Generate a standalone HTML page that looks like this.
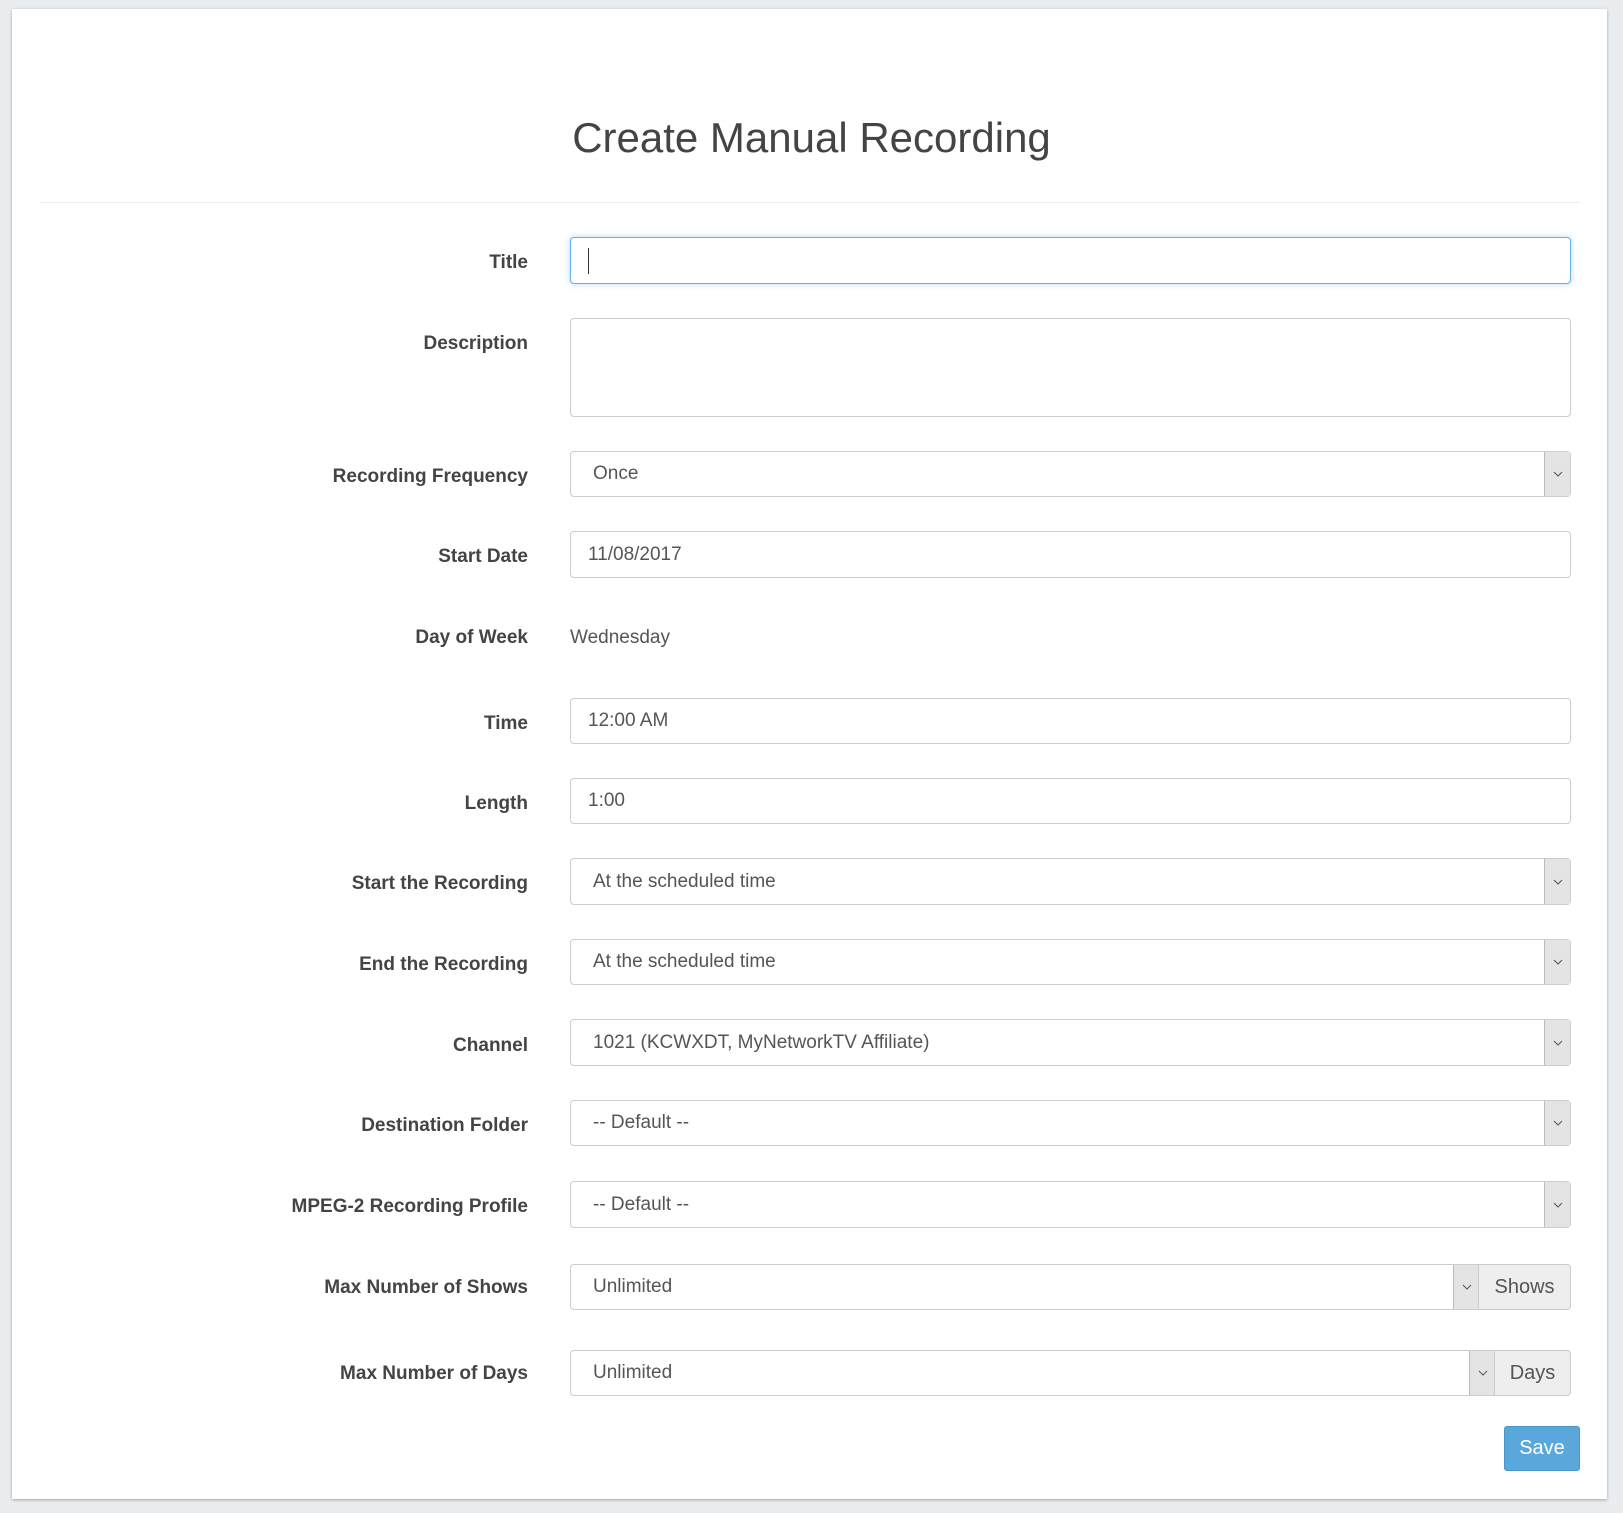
<!DOCTYPE html>
<html><head><meta charset="utf-8"><style>
body{margin:0;width:1623px;height:1513px;background:#e9edf0;font-family:"Liberation Sans",sans-serif;color:#555;position:relative;overflow:hidden}
.panel{position:absolute;left:12px;top:9px;width:1595px;height:1490px;background:#fff;box-shadow:0 1px 3px rgba(0,0,0,.3)}
h1{position:absolute;left:0;width:1623px;top:114px;margin:0;text-align:center;font-weight:normal;font-size:42px;color:#444}
.hr{position:absolute;left:39px;width:1541px;top:202px;height:1px;background:#eee}
.lab{position:absolute;right:1095px;font-weight:bold;font-size:19px;color:#444;text-align:right;white-space:nowrap}
.in{position:absolute;left:570px;width:1001px;border:1px solid #ccc;border-radius:4px;box-sizing:border-box;font-size:19px;color:#555;padding-left:17px;display:flex;align-items:center;background:#fff}
.sel{padding-left:22px}
.arr{position:absolute;top:0;bottom:0;width:25px;background:#e4e4e4;border-left:1px solid #bbb;display:flex;align-items:center;justify-content:center}
.arr svg{width:10px;height:6px}
.add{position:absolute;top:-1px;bottom:-1px;right:-1px;background:#eee;border:1px solid #ccc;border-radius:0 4px 4px 0;display:flex;align-items:center;justify-content:center;font-size:20px;color:#555;box-sizing:border-box}
.btn{position:absolute;left:1504px;top:1426px;width:76px;height:45px;background:#5aa7dc;border:1px solid #4a95c8;border-radius:3px;color:#fff;font-size:20px;display:flex;align-items:center;justify-content:center;box-sizing:border-box}
</style></head><body>
<div class="panel"></div>
<h1>Create Manual Recording</h1>
<div class="hr"></div>

<div class="lab" style="top:252px">Title</div>
<div class="in" style="top:237px;height:47px;border-color:#66afe9;box-shadow:0 0 6px rgba(102,175,233,.5)"><span style="display:inline-block;width:1px;height:26px;background:#333"></span></div>

<div class="lab" style="top:333px">Description</div>
<div class="in" style="top:318px;height:99px"></div>

<div class="lab" style="top:466px">Recording Frequency</div>
<div class="in sel" style="top:451px;height:46px">Once<div class="arr" style="right:0"><svg viewBox="0 0 10 6"><path d="M1 1L5 5L9 1" stroke="#555" fill="none"/></svg></div></div>

<div class="lab" style="top:546px">Start Date</div>
<div class="in" style="top:531px;height:47px">11/08/2017</div>

<div class="lab" style="top:627px">Day of Week</div>
<div style="position:absolute;left:570px;top:627px;font-size:19px;color:#555">Wednesday</div>

<div class="lab" style="top:713px">Time</div>
<div class="in" style="top:698px;height:46px">12:00 AM</div>

<div class="lab" style="top:793px">Length</div>
<div class="in" style="top:778px;height:46px">1:00</div>

<div class="lab" style="top:873px">Start the Recording</div>
<div class="in sel" style="top:858px;height:47px">At the scheduled time<div class="arr" style="right:0"><svg viewBox="0 0 10 6"><path d="M1 1L5 5L9 1" stroke="#555" fill="none"/></svg></div></div>

<div class="lab" style="top:954px">End the Recording</div>
<div class="in sel" style="top:939px;height:46px">At the scheduled time<div class="arr" style="right:0"><svg viewBox="0 0 10 6"><path d="M1 1L5 5L9 1" stroke="#555" fill="none"/></svg></div></div>

<div class="lab" style="top:1035px">Channel</div>
<div class="in sel" style="top:1019px;height:47px">1021 (KCWXDT, MyNetworkTV Affiliate)<div class="arr" style="right:0"><svg viewBox="0 0 10 6"><path d="M1 1L5 5L9 1" stroke="#555" fill="none"/></svg></div></div>

<div class="lab" style="top:1115px">Destination Folder</div>
<div class="in sel" style="top:1100px;height:46px">-- Default --<div class="arr" style="right:0"><svg viewBox="0 0 10 6"><path d="M1 1L5 5L9 1" stroke="#555" fill="none"/></svg></div></div>

<div class="lab" style="top:1196px">MPEG-2 Recording Profile</div>
<div class="in sel" style="top:1181px;height:47px">-- Default --<div class="arr" style="right:0"><svg viewBox="0 0 10 6"><path d="M1 1L5 5L9 1" stroke="#555" fill="none"/></svg></div></div>

<div class="lab" style="top:1277px">Max Number of Shows</div>
<div class="in sel" style="top:1264px;height:46px">Unlimited<div class="arr" style="right:91px"><svg viewBox="0 0 10 6"><path d="M1 1L5 5L9 1" stroke="#555" fill="none"/></svg></div><div class="add" style="width:93px">Shows</div></div>

<div class="lab" style="top:1363px">Max Number of Days</div>
<div class="in sel" style="top:1350px;height:46px">Unlimited<div class="arr" style="right:75px"><svg viewBox="0 0 10 6"><path d="M1 1L5 5L9 1" stroke="#555" fill="none"/></svg></div><div class="add" style="width:77px">Days</div></div>

<div class="btn">Save</div>
</body></html>
